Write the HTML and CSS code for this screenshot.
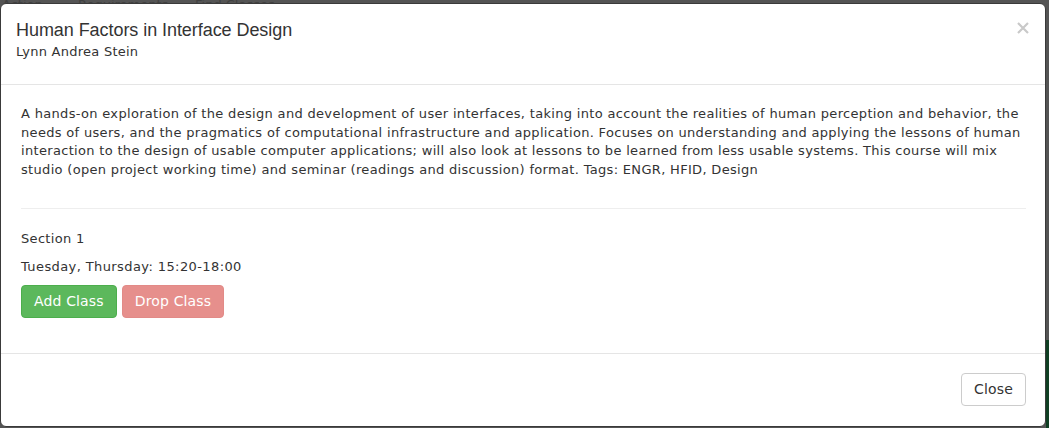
FILE: index.html
```html
<!DOCTYPE html>
<html>
<head>
<meta charset="utf-8">
<link rel="stylesheet" href="styles.css">
</head>
<body>
<div class="backdrop-nav">
  <span class="nav-item n1">Action</span>
  <span class="nav-item n2">Requirements</span>
  <span class="nav-item n3">Find Classes</span>
</div>
<div class="backdrop-green"></div>
<div class="modal">
  <div class="modal-header">
    <div class="title-row">
      <h4 class="modal-title">Human Factors in Interface Design</h4>
      <svg class="close-x" width="12" height="12" viewBox="0 0 12 12"><path d="M1 1 L11 11 M11 1 L1 11" stroke="#c9c9c9" stroke-width="2.2" fill="none"/></svg>
    </div>
    <div class="subtitle">Lynn Andrea Stein</div>
  </div>
  <div class="modal-body">
    <p class="desc">A hands-on exploration of the design and development of user interfaces, taking into account the realities of human perception and behavior, the needs of users, and the pragmatics of computational infrastructure and application. Focuses on understanding and applying the lessons of human interaction to the design of usable computer applications; will also look at lessons to be learned from less usable systems. This course will mix studio (open project working time) and seminar (readings and discussion) format. Tags: ENGR, HFID, Design</p>
    <hr class="divider">
    <p class="line">Section 1</p>
    <p class="line line-last">Tuesday, Thursday: 15:20-18:00</p>
    <div class="actions">
      <button class="btn btn-success">Add Class</button>
      <button class="btn btn-danger" disabled>Drop Class</button>
    </div>
  </div>
  <div class="modal-footer">
    <button class="btn btn-default">Close</button>
  </div>
</div>
</body>
</html>
```
FILE: styles.css
```css
html, body {
  margin: 0;
  padding: 0;
}
body {
  width: 1049px;
  height: 428px;
  overflow: hidden;
  background: #545454;
  font-family: "DejaVu Sans", Verdana, sans-serif;
  color: #333;
  position: relative;
}
.backdrop-nav {
  position: absolute;
  top: 0;
  left: 0;
  height: 14px;
  font-family: "DejaVu Sans", sans-serif;
  font-size: 13px;
  line-height: 14px;
  color: #404040;
  white-space: nowrap;
}
.nav-item { position: absolute; top: -2px; }
.n1 { left: 2px; }
.n2 { left: 78px; }
.n3 { left: 195px; }
.backdrop-green {
  position: absolute;
  left: 1046px;
  top: 340px;
  width: 3px;
  height: 88px;
  background: #0f3f23;
}
.modal {
  position: absolute;
  left: 0;
  top: 3px;
  width: 1046px;
  height: 424px;
  box-sizing: border-box;
  background: #fff;
  border: 1px solid #3a3a3a;
  border-radius: 6px;
  display: flex;
  flex-direction: column;
}
.modal-header {
  height: 81px;
  box-sizing: border-box;
  padding: 16px 15px 0 15px;
  border-bottom: 1px solid #e5e5e5;
}
.title-row {
  display: flex;
  justify-content: space-between;
  align-items: flex-start;
}
.modal-title {
  margin: 0;
  font-family: "Liberation Sans", Arial, sans-serif;
  font-weight: normal;
  font-size: 18px;
  line-height: 20px;
  letter-spacing: -0.06px;
  color: #333;
}
.close-x {
  margin-top: 2px;
  margin-right: 1px;
}
.subtitle {
  margin-top: 3px;
  font-size: 13px;
  line-height: 18px;
  letter-spacing: 0.25px;
}
.modal-body {
  padding: 20px 19px 34px 20px;
  font-size: 13px;
  letter-spacing: 0.32px;
}
.desc {
  margin: 0;
  line-height: 18.6px;
}
.divider {
  margin: 29px 0 21px;
  border: 0;
  border-top: 1px solid #eee;
  height: 0;
}
.line {
  margin: 0 0 10px;
  line-height: 18px;
}
.line-last {
  margin-bottom: 9px;
  letter-spacing: 0.4px;
}
.actions {
  display: flex;
  gap: 5px;
}
.btn {
  font-family: "DejaVu Sans", Verdana, sans-serif;
  font-size: 14px;
  line-height: 19px;
  letter-spacing: 0.15px;
  padding: 6px 12px;
  border-radius: 4px;
  border: 1px solid transparent;
  margin: 0;
}
.btn-success {
  background: #5cb85c;
  border-color: #4cae4c;
  color: #fff;
}
.btn-danger {
  background: #e68f8c;
  border-color: #e28a87;
  color: #fff;
}
.modal-footer {
  margin-top: auto;
  border-top: 1px solid #e5e5e5;
  padding: 19px 19px 20px;
  display: flex;
  justify-content: flex-end;
}
.btn-default {
  background: #fff;
  border-color: #ccc;
  color: #333;
}
```
